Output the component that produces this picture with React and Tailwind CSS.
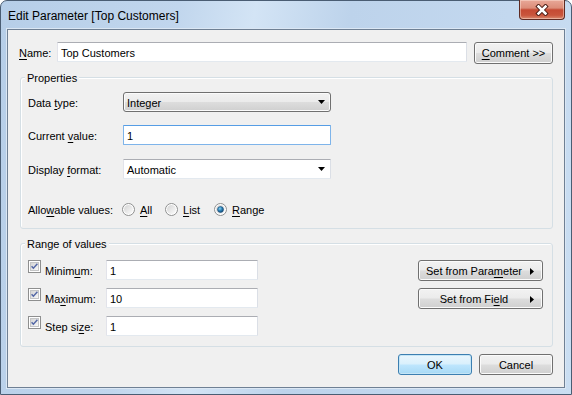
import React from "react";

const U = ({ children }) => (
  <span className="underline underline-offset-[2px] decoration-[1px]">{children}</span>
);

const DownArrow = () => (
  <svg width="7" height="4" viewBox="0 0 7 4">
    <path d="M0 0H7L3.5 4Z" fill="#000" />
  </svg>
);

const RightArrow = () => (
  <svg width="4" height="7" viewBox="0 0 4 7">
    <path d="M0 0L4 3.5L0 7Z" fill="#000" />
  </svg>
);

const Check = () => (
  <svg width="13" height="13" viewBox="0 0 13 13" className="shrink-0">
    <defs>
      <linearGradient id="cbbg" x1="0" y1="0" x2="1" y2="1">
        <stop offset="0" stopColor="#d2d2d2" />
        <stop offset="1" stopColor="#fafafa" />
      </linearGradient>
    </defs>
    <rect x="0.5" y="0.5" width="12" height="12" fill="#fff" stroke="#8e8f8f" />
    <rect x="2.5" y="2.5" width="8" height="8" fill="url(#cbbg)" stroke="#c4c5c6" />
    <path d="M3.6 6.2L5.4 8.2L9.4 3.8" stroke="#5468a6" strokeWidth="1.5" fill="none" />
  </svg>
);

const Radio = ({ on }) => (
  <svg width="13" height="13" viewBox="0 0 13 13" className="shrink-0">
    <defs>
      <linearGradient id="rgbg" x1="0" y1="0" x2="1" y2="1">
        <stop offset="0" stopColor="#d4d4d4" />
        <stop offset="1" stopColor="#fcfcfc" />
      </linearGradient>
      <radialGradient id="rgdot" cx="0.4" cy="0.35" r="0.7">
        <stop offset="0" stopColor="#8ad3f3" />
        <stop offset="0.5" stopColor="#2b80b5" />
        <stop offset="1" stopColor="#0c3f6b" />
      </radialGradient>
    </defs>
    <circle cx="6.5" cy="6.5" r="6" fill="#fff" stroke="#8e8f8f" />
    <circle cx="6.5" cy="6.5" r="4.5" fill="url(#rgbg)" />
    {on && <circle cx="6.5" cy="6.5" r="3" fill="url(#rgdot)" stroke="#1c4f78" strokeWidth="0.6" />}
  </svg>
);

const Btn = ({ children, className }) => (
  <div
    className={
      "flex items-center justify-center pt-[1px] rounded-[3px] border border-[#707070] bg-[linear-gradient(#f2f2f2_0%,#ebebeb_48%,#dddddd_52%,#cfcfcf_100%)] shadow-[inset_0_0_0_1px_#fbfbfb] text-[11px] text-black " +
      className
    }
  >
    {children}
  </div>
);

const TextBox = ({ children, className }) => (
  <div
    className={
      "flex items-center pl-[3px] pt-[2px] h-[20px] bg-white border border-t-[#abadb3] border-l-[#e2e3ea] border-r-[#dbdfe6] border-b-[#e3e9ef] rounded-[1px] text-[11px] " +
      className
    }
  >
    {children}
  </div>
);

export default function App() {
  return (
    <div className="font-['Liberation_Sans',Arial,sans-serif] text-black">
      <div className="relative w-[572px] h-[395px] flex flex-col rounded-t-[7px] border border-[#4a5d73] bg-[linear-gradient(100deg,#b6cee8_0%,#c1d6ed_28%,#d3e4f5_40%,#bdd3eb_55%,#c3d8ef_80%,#cadef2_100%)] px-[6px] pb-[6px]">
        {/* Title bar */}
        <div className="h-[28px] flex items-center pl-[1px] pt-[2px] text-[12px] text-black">
          Edit Parameter [Top Customers]
        </div>
        {/* Close button */}
        <div className="absolute top-[-1px] right-[6px] w-[46px] h-[20px] rounded-b-[4px] border border-t-0 border-[#5e2a22] bg-[linear-gradient(#e8a898_0%,#dc8d79_42%,#c54a33_52%,#c9553c_80%,#d98a6f_100%)] shadow-[inset_0_0_0_1px_rgba(255,230,220,0.45)] flex items-center justify-center">
          <svg width="14" height="12" viewBox="0 0 14 12">
            <path d="M3.5 2.5L10.5 9.5M10.5 2.5L3.5 9.5" stroke="#4a1c14" strokeWidth="4.4" strokeLinecap="square" />
            <path d="M3.5 2.5L10.5 9.5M10.5 2.5L3.5 9.5" stroke="#ffffff" strokeWidth="2.5" strokeLinecap="square" />
          </svg>
        </div>

        {/* Client area */}
        <div className="flex-1 flex flex-col border border-[#6f8094] bg-[#f0f0f0] shadow-[0_0_0_1px_#dbe7f4] text-[11px]">
          {/* Name row */}
          <div className="mt-[12px] ml-[11px] flex items-start h-[22px]">
            <div className="w-[38px] h-[20px] flex items-center pt-[3px]">
              <U>N</U>ame:
            </div>
            <TextBox className="w-[410px]">Top Customers</TextBox>
            <Btn className="ml-[7px] w-[79px] h-[22px]">
              <U>C</U>omment &gt;&gt;
            </Btn>
          </div>

          {/* Properties group */}
          <div className="relative mt-[13px] ml-[12px] w-[533px] h-[152px] border border-[#d5dfe5] rounded-[3px] shadow-[inset_1px_1px_0_#ffffff] flex flex-col">
            <span className="absolute left-[4px] top-[-7px] px-[2px] bg-[#f0f0f0] leading-[14px]">Properties</span>

            <div className="mt-[14px] ml-[7px] flex items-center h-[20px]">
              <div className="w-[95px] pt-[2px]">
                Data <U>t</U>ype:
              </div>
              <div className="w-[208px] h-[20px] flex items-center justify-between pl-[3px] pr-[5px] rounded-[3px] border border-[#707070] bg-[linear-gradient(#f2f2f2_0%,#ebebeb_48%,#dddddd_52%,#cfcfcf_100%)] shadow-[inset_0_0_0_1px_#fbfbfb]">
                <span className="pt-[2px]">Integer</span>
                <DownArrow />
              </div>
            </div>

            <div className="mt-[13px] ml-[7px] flex items-center h-[20px]">
              <div className="w-[95px] pt-[2px]">
                Current <U>v</U>alue:
              </div>
              <div className="w-[208px] h-[20px] flex items-center pl-[3px] pt-[2px] bg-white border border-[#7eb4ea] border-t-[#569de5] rounded-[1px]">
                1
              </div>
            </div>

            <div className="mt-[14px] ml-[7px] flex items-center h-[20px]">
              <div className="w-[95px] pt-[2px]">
                Display <U>f</U>ormat:
              </div>
              <div className="w-[208px] h-[20px] flex items-center justify-between pl-[3px] pr-[5px] bg-white border border-t-[#abadb3] border-l-[#e2e3ea] border-r-[#dbdfe6] border-b-[#e3e9ef] rounded-[1px]">
                <span className="pt-[2px]">Automatic</span>
                <DownArrow />
              </div>
            </div>

            <div className="mt-[22px] ml-[7px] flex items-center h-[16px]">
              <div className="w-[94px] pt-[2px]">
                Allo<U>w</U>able values:
              </div>
              <div className="w-[43px] flex items-center gap-[5px]">
                <Radio />
                <span className="pt-[2px]">
                  <U>A</U>ll
                </span>
              </div>
              <div className="w-[49px] flex items-center gap-[5px]">
                <Radio />
                <span className="pt-[2px]">
                  <U>L</U>ist
                </span>
              </div>
              <div className="flex items-center gap-[5px]">
                <Radio on />
                <span className="pt-[2px]">
                  <U>R</U>ange
                </span>
              </div>
            </div>
          </div>

          {/* Range group */}
          <div className="relative mt-[14px] ml-[12px] w-[533px] h-[104px] border border-[#d5dfe5] rounded-[3px] shadow-[inset_1px_1px_0_#ffffff] flex justify-between">
            <span className="absolute left-[4px] top-[-7px] px-[2px] bg-[#f0f0f0] leading-[14px]">Range of values</span>

            <div className="mt-[16px] ml-[7px] flex flex-col gap-[8px]">
              <div className="flex items-start h-[20px]">
                <Check />
                <div className="ml-[4px] w-[61px] h-[20px] flex items-center pt-[3px]">
                  Minim<U>u</U>m:
                </div>
                <TextBox className="w-[152px]">1</TextBox>
              </div>
              <div className="flex items-start h-[20px]">
                <Check />
                <div className="ml-[4px] w-[61px] h-[20px] flex items-center pt-[3px]">
                  Ma<U>x</U>imum:
                </div>
                <TextBox className="w-[152px]">10</TextBox>
              </div>
              <div className="flex items-start h-[20px]">
                <Check />
                <div className="ml-[4px] w-[61px] h-[20px] flex items-center pt-[3px]">
                  Step si<U>z</U>e:
                </div>
                <TextBox className="w-[152px]">1</TextBox>
              </div>
            </div>

            <div className="mt-[16px] mr-[9px] flex flex-col gap-[7px]">
              <Btn className="w-[125px] h-[21px] !justify-between pl-[5px] pr-[8px]">
                <span className="w-[100px] text-center">
                  Set from Para<U>m</U>eter
                </span>
                <RightArrow />
              </Btn>
              <Btn className="w-[125px] h-[21px] !justify-between pl-[5px] pr-[8px]">
                <span className="w-[100px] text-center">
                  Set from Fi<U>e</U>ld
                </span>
                <RightArrow />
              </Btn>
            </div>
          </div>

          {/* OK / Cancel */}
          <div className="mt-[7px] ml-[12px] w-[533px] flex justify-end gap-[7px]">
            <div className="w-[74px] h-[21px] flex items-center justify-center pt-[1px] rounded-[3px] border border-[#3c7fb1] bg-[linear-gradient(#eaf6fd_0%,#d9f0fc_48%,#bee6fd_52%,#a7d9f5_100%)] shadow-[inset_0_0_0_1px_#c4e5f6]">
              OK
            </div>
            <Btn className="w-[74px] h-[21px]">Cancel</Btn>
          </div>
        </div>
      </div>
    </div>
  );
}
